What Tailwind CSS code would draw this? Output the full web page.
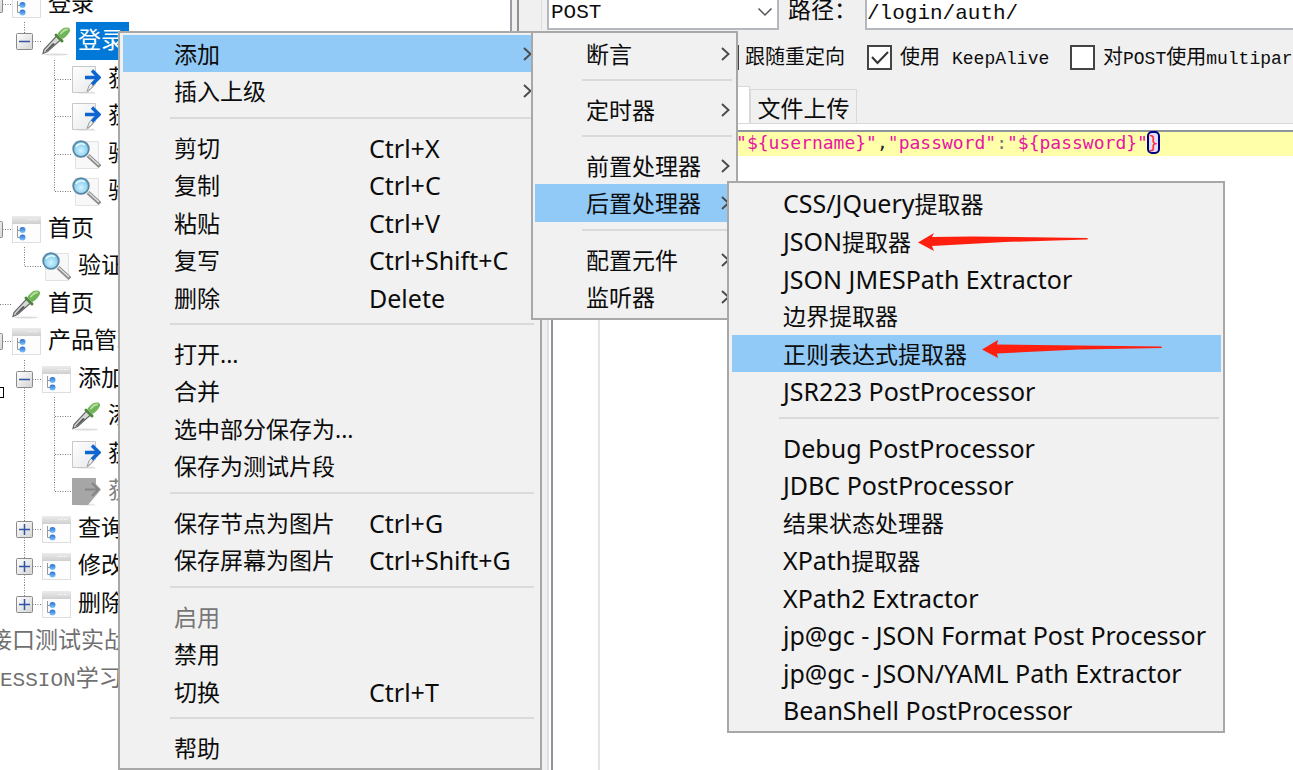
<!DOCTYPE html>
<html lang="zh-CN">
<head>
<meta charset="utf-8">
<title>JMeter</title>
<script src="https://cdn.jsdelivr.net/npm/@tailwindcss/browser@4"></script>
</head>
<body class="relative h-screen overflow-hidden bg-[#f0f0f0] font-['Noto_Sans','Noto_Sans_CJK_SC',sans-serif] text-[#0c0c0c]">

<!-- shared symbols -->
<svg class="absolute size-0" aria-hidden="true">
  <defs>
    <linearGradient id="bar" x1="0" y1="0" x2="0" y2="1"><stop offset="0" stop-color="#ececec"/><stop offset="1" stop-color="#cfcfcf"/></linearGradient>
    <linearGradient id="ball" x1="0" y1="0" x2="0" y2="1"><stop offset="0" stop-color="#2b6fd0"/><stop offset="1" stop-color="#7cc4ff"/></linearGradient>
    <linearGradient id="page" x1="0" y1="0" x2="1" y2="1"><stop offset="0" stop-color="#fff"/><stop offset="1" stop-color="#e6e8ea"/></linearGradient>
    <linearGradient id="box" x1="0" y1="0" x2="1" y2="1"><stop offset="0" stop-color="#fff"/><stop offset="1" stop-color="#d4d4d4"/></linearGradient>
    <radialGradient id="lens" cx=".5" cy=".6" r=".6"><stop offset="0" stop-color="#d4f4ff"/><stop offset="1" stop-color="#6fc3ea"/></radialGradient>
  </defs>
  <symbol id="folder" viewBox="0 0 30 32">
    <rect x="1.500" y="3.500" width="28" height="26" fill="#fdfdfd" stroke="#dedede"/>
    <rect x="1" y="3" width="29" height="8" fill="url(#bar)"/>
    <path d="M17 6.500h10" stroke="#f4f4f4" stroke-width="1" stroke-dasharray="2 1"/>
    <path d="M6.500 13v11.500h4M6.500 17.500h4" fill="none" stroke="#999"/>
    <circle cx="11.500" cy="17" r="3" fill="url(#ball)"/><circle cx="11.500" cy="24.500" r="3" fill="url(#ball)"/>
  </symbol>
  <symbol id="dropper" viewBox="0 0 30 32">
    <ellipse cx="15" cy="29.500" rx="12" ry="1" fill="#dcdcdc"/>
    <path d="M2 28.500l1-4L15.500 11l4 4L6.500 26.500z" fill="#d7d9d8" stroke="#666" stroke-width="1.200"/>
    <path d="M4 26.500L12 18l2 1-8 7z" fill="#555"/>
    <path d="M15 10l6 6" stroke="#4f853c" stroke-width="3" stroke-linecap="round"/>
    <path d="M16.500 9c2-3 5-6.500 9-6.500 3 0 4.500 2 3 4.500-1.800 3-4.500 6-7.500 7z" fill="#6fb558"/>
    <path d="M20 8.500c2-2.500 4-4 6-4" fill="none" stroke="#b5e09f" stroke-width="2" stroke-linecap="round"/>
  </symbol>
  <symbol id="extract" viewBox="0 0 30 32">
    <path d="M5 30.500h20l-3-2z" fill="#ddd"/>
    <path d="M1.500 3.500h23v18l-8 8h-15z" fill="url(#page)" stroke="#c8c8c8"/>
    <path d="M23 17l-5 6-2 5.500 4.500-3.500 4-7z" fill="#f1f1f1" stroke="#999"/>
    <path d="M14 14.500h12M21 7.500l7 7-7 7" fill="none" stroke="#0b66cf" stroke-width="3.400"/>
  </symbol>
  <symbol id="extract-off" viewBox="0 0 30 32">
    <path d="M5 30.500h20l-3-2z" fill="#e4e4e4"/>
    <path d="M1 3h24v6l5 5.500-5 6-8 9.500H1z" fill="#a6a6a6"/>
    <path d="M14 14.500h13M21 8l6.500 6.500L21 21" fill="none" stroke="#858585" stroke-width="2"/>
  </symbol>
  <symbol id="magnifier" viewBox="0 0 30 32">
    <path d="M4.500 3.500h23v27h-23z" fill="#f8f8f8" stroke="#e2e2e2"/>
    <path d="M17 17.500L29 28.500" stroke="#8a8a8a" stroke-width="4"/>
    <path d="M17.500 17.500L28 27" stroke="#e0e0e0" stroke-width="1.500"/>
    <circle cx="10" cy="11" r="7.800" fill="url(#lens)" stroke="#5a86a3" stroke-width="1.800"/>
    <path d="M5 9c1-3 6-4.500 9-2" fill="none" stroke="#eafaff" stroke-width="1.500"/>
  </symbol>
  <!-- guide cells of the tree, 30px wide, centred on y = 19 -->
  <g id="g-v"><path d="M13.500 0V38" stroke="#777" stroke-dasharray="1 1.500"/></g>
  <g id="g-h"><path d="M14 19.500H30" stroke="#777" stroke-dasharray="1 1.500"/></g>
  <g id="g-up"><path d="M13.500 0V19" stroke="#777" stroke-dasharray="1 1.500"/></g>
  <g id="g-box"><rect x="5.500" y="11.500" width="16" height="16" rx="1" fill="url(#box)" stroke="#8a8a8a"/><path d="M8 19.500h11" stroke="#3353a8" stroke-width="1.500"/></g>
  <g id="g-plus"><use href="#g-box"/><path d="M13.500 14v11" stroke="#3353a8" stroke-width="1.500"/></g>
  <symbol id="chev" viewBox="0 0 10 16"><path d="M1 2l6.500 6L1 14" fill="none" stroke="#4a4a4a" stroke-width="1.900"/></symbol>
</svg>

<div class="flex h-full">
  <!-- test plan tree -->
  <aside class="w-[512px] shrink-0 overflow-hidden border-r-2 border-[#9a9da3] bg-white">
    <ul role="tree" aria-label="测试计划" class="-mt-[15px] font-['Liberation_Mono','Noto_Sans_CJK_SC',monospace] text-[23px] leading-[35px] whitespace-nowrap *:flex *:h-[38px] *:items-center *:odd:h-[37px] [&_span]:ml-[5px] [&_span]:px-[2px] [&_span]:pt-[3px] [&_svg]:shrink-0">
      <li role="treeitem"><svg class="h-full w-[11px]"><use href="#g-h" x="-19"/><use href="#g-box" x="-19"/></svg><svg class="h-8 w-[30px]"><use href="#folder"/></svg><span>登录</span></li>
      <li role="treeitem" aria-selected="true"><svg class="ml-[11px] h-full w-[30px]"><use href="#g-up"/><use href="#g-h"/><use href="#g-box"/></svg><svg class="h-8 w-[30px]"><use href="#dropper"/></svg><span class="w-[53px] bg-[#0078d7] text-white">登录</span></li>
      <li role="treeitem"><svg class="ml-[41px] h-full w-[30px]"><use href="#g-v"/><use href="#g-h"/></svg><svg class="h-8 w-[30px]"><use href="#extract"/></svg><span>获取</span></li>
      <li role="treeitem"><svg class="ml-[41px] h-full w-[30px]"><use href="#g-v"/><use href="#g-h"/></svg><svg class="h-8 w-[30px]"><use href="#extract"/></svg><span>获取</span></li>
      <li role="treeitem"><svg class="ml-[41px] h-full w-[30px]"><use href="#g-v"/><use href="#g-h"/></svg><svg class="h-8 w-[30px]"><use href="#magnifier"/></svg><span>验证</span></li>
      <li role="treeitem"><svg class="ml-[41px] h-full w-[30px]"><use href="#g-up"/><use href="#g-h"/></svg><svg class="h-8 w-[30px]"><use href="#magnifier"/></svg><span>验证</span></li>
      <li role="treeitem"><svg class="h-full w-[11px]"><use href="#g-h" x="-19"/><use href="#g-box" x="-19"/></svg><svg class="h-8 w-[30px]"><use href="#folder"/></svg><span>首页</span></li>
      <li role="treeitem"><svg class="ml-[11px] h-full w-[30px]"><use href="#g-up"/><use href="#g-h"/></svg><svg class="h-8 w-[30px]"><use href="#magnifier"/></svg><span>验证</span></li>
      <li role="treeitem"><svg class="h-full w-[11px]"><use href="#g-h" x="-19"/></svg><svg class="h-8 w-[30px]"><use href="#dropper"/></svg><span>首页</span></li>
      <li role="treeitem"><svg class="h-full w-[11px]"><use href="#g-h" x="-19"/><use href="#g-box" x="-19"/></svg><svg class="h-8 w-[30px]"><use href="#folder"/></svg><span>产品管理</span></li>
      <li role="treeitem"><svg class="ml-[11px] h-full w-[30px]"><use href="#g-v"/><use href="#g-h"/><use href="#g-box"/></svg><svg class="h-8 w-[30px]"><use href="#folder"/></svg><span>添加</span></li>
      <li role="treeitem"><svg class="ml-[11px] h-full w-[30px]"><use href="#g-v"/></svg><svg class="h-full w-[30px]"><use href="#g-v"/><use href="#g-h"/></svg><svg class="h-8 w-[30px]"><use href="#dropper"/></svg><span>添加</span></li>
      <li role="treeitem"><svg class="ml-[11px] h-full w-[30px]"><use href="#g-v"/></svg><svg class="h-full w-[30px]"><use href="#g-v"/><use href="#g-h"/></svg><svg class="h-8 w-[30px]"><use href="#extract"/></svg><span>获取</span></li>
      <li role="treeitem"><svg class="ml-[11px] h-full w-[30px]"><use href="#g-v"/></svg><svg class="h-full w-[30px]"><use href="#g-up"/><use href="#g-h"/></svg><svg class="h-8 w-[30px]"><use href="#extract-off"/></svg><span class="text-[#808080]">获取</span></li>
      <li role="treeitem"><svg class="ml-[11px] h-full w-[30px]"><use href="#g-v"/><use href="#g-h"/><use href="#g-plus"/></svg><svg class="h-8 w-[30px]"><use href="#folder"/></svg><span>查询</span></li>
      <li role="treeitem"><svg class="ml-[11px] h-full w-[30px]"><use href="#g-v"/><use href="#g-h"/><use href="#g-plus"/></svg><svg class="h-8 w-[30px]"><use href="#folder"/></svg><span>修改</span></li>
      <li role="treeitem"><svg class="ml-[11px] h-full w-[30px]"><use href="#g-up"/><use href="#g-h"/><use href="#g-plus"/></svg><svg class="h-8 w-[30px]"><use href="#folder"/></svg><span>删除</span></li>
      <li role="treeitem" class="-ml-[18px] text-[#707070]"><span>接口测试实战</span></li>
      <li role="treeitem" class="-ml-[7px] text-[#707070]"><span><span class="!m-0 !p-0 text-[21px]">ESSION</span>学习</span></li>
    </ul>
  </aside>

  <!-- request editor -->
  <main class="ml-[5px] flex min-w-0 flex-1 flex-col overflow-hidden border-l-2 border-[#909090] font-['Liberation_Mono','Noto_Sans_CJK_SC',monospace] whitespace-nowrap">
    <div class="ml-[22px] flex h-[30px] border-l border-[#dcdcdc] pl-[5px] text-[23px]">
      <div class="relative w-[232px] shrink-0">
        <select aria-label="方法" class="block h-full w-full appearance-none border-x-2 border-b-2 border-[#b4b7bd] bg-white pb-[2px] pl-[2px] text-[21px] leading-[24px]"><option>POST</option></select>
        <svg class="pointer-events-none absolute top-[6px] right-[6px] h-3 w-4" viewBox="0 0 16 12"><path d="M1.500 2.500L8 9l6.500-6.500" fill="none" stroke="#555" stroke-width="1.500"/></svg>
      </div>
      <label for="path" class="w-[86px] shrink-0 pl-[9px] leading-[24px]">路径：</label>
      <input id="path" value="/login/auth/" class="h-full min-w-0 flex-1 border-b-2 border-l-2 border-[#b4b7bd] bg-white pb-[2px] text-[21px] leading-[24px]">
    </div>
    <div class="flex h-[54px] items-center pl-[195px] text-[20px] *:flex *:shrink-0 *:items-center *:gap-[8px] [&_input]:size-[25px] [&_input]:appearance-none [&_input]:border-2 [&_input]:border-[#444] [&_input]:bg-white [&>label>span]:pt-[4px]">
      <label class="w-[153px] !gap-[6px]"><input type="checkbox"><span>跟随重定向</span></label>
      <label class="relative w-[203px]"><input type="checkbox" checked><svg class="pointer-events-none absolute left-0 size-[25px]" viewBox="0 0 25 25"><path d="M5 12l5.500 6L21 7" fill="none" stroke="#333" stroke-width="2"/></svg><span>使用 <span class="text-[18px]">KeepAlive</span></span></label>
      <label><input type="checkbox"><span>对<span class="text-[18px]">POST</span>使用<span class="text-[18px]">multipart/form-data</span></span></label>
    </div>
    <div role="tablist" class="mt-[3px] flex h-[37px] items-end border-b border-[#d9d9d9] pl-[29px] text-[23px] *:shrink-0 *:border-x *:border-t *:border-[#d9d9d9] *:pt-[4px]">
      <button role="tab" class="h-[34px] w-[68px]">参数</button>
      <button role="tab" aria-selected="true" class="h-[37px] w-[134px] bg-white pr-[12px] text-right">消息体数据</button>
      <button role="tab" class="h-[34px] w-[107px]">文件上传</button>
    </div>
    <div class="ml-[28px] flex min-h-0 flex-1 flex-col border-l-2 border-[#dedede] bg-white pt-[6px] pl-[2px]">
      <div class="flex flex-1 border-t-2 border-l-2 border-[#8f949b] font-['DejaVu_Sans_Mono',monospace] text-[18px] leading-[22px]">
        <div class="w-[47px] shrink-0 border-r-2 border-[#e4e4e4]"></div>
        <div role="textbox" aria-label="消息体数据" class="min-w-0 flex-1"><p class="bg-[#ffffaa] pb-[2px] pl-[6px] text-[#e815a5]"><span class="text-red-600">{</span>"username"<span class="text-[#333]">:</span>"${username}"<span class="text-[#222]">,</span>"password"<span class="text-[#777]">:</span>"${password}"<span class="rounded-sm bg-[#e3e0ff] text-[#ff3030] outline-2 -outline-offset-1 outline-[#000080]">}</span></p></div>
      </div>
    </div>
  </main>
</div>

<div class="absolute top-[387px] -left-[4px] h-[11px] w-[8px] border border-black bg-white"></div>

<!-- context menu with its two open submenus -->
<div class="absolute top-[31px] left-[118px] w-[424px] text-[23px] leading-[34px] [&_button]:flex [&_button]:h-[37px] [&_button]:w-full [&_button]:items-center [&_button]:pl-[51px] [&_button]:text-left [&_button]:whitespace-nowrap [&_button:nth-child(even)]:h-[38px] [&_hr]:mr-[2px] [&_hr]:ml-[47px] [&_hr]:h-[19px] [&_hr]:border-t-0 [&_hr]:bg-[linear-gradient(#dadada,#dadada)] [&_hr]:bg-[length:100%_2px] [&_hr]:bg-[position:0_7px] [&_hr]:bg-no-repeat [&_b]:text-[25px] [&_b]:font-normal [&_kbd]:font-[inherit] [&_kbd]:text-[25px] [&_svg]:h-4 [&_svg]:w-[10px] [&_svg]:shrink-0">
  <div role="menu" class="border-2 border-[#a8a8a8] bg-[#f1f1f1] py-[2px] pr-[4px] pl-[3px]">
    <div>
      <button role="menuitem" class="bg-[#91c9f7] pr-[3px]"><span class="flex-1">添加</span><svg><use href="#chev"/></svg></button>
      <button role="menuitem" class="pr-[3px]"><span class="flex-1">插入上级</span><svg><use href="#chev"/></svg></button>
    </div>
    <hr>
    <div class="[&_span]:w-[195px]">
      <button role="menuitem"><span>剪切</span><kbd>Ctrl+X</kbd></button>
      <button role="menuitem"><span>复制</span><kbd>Ctrl+C</kbd></button>
      <button role="menuitem"><span>粘贴</span><kbd>Ctrl+V</kbd></button>
      <button role="menuitem"><span>复写</span><kbd>Ctrl+Shift+C</kbd></button>
      <button role="menuitem"><span>删除</span><kbd>Delete</kbd></button>
    </div>
    <hr>
    <div>
      <button role="menuitem">打开...</button>
      <button role="menuitem">合并</button>
      <button role="menuitem">选中部分保存为...</button>
      <button role="menuitem">保存为测试片段</button>
    </div>
    <hr>
    <div class="[&_span]:w-[195px]">
      <button role="menuitem"><span>保存节点为图片</span><kbd>Ctrl+G</kbd></button>
      <button role="menuitem"><span>保存屏幕为图片</span><kbd>Ctrl+Shift+G</kbd></button>
    </div>
    <hr>
    <div class="[&_span]:w-[195px]">
      <button role="menuitem" disabled class="text-[#767676]">启用</button>
      <button role="menuitem">禁用</button>
      <button role="menuitem"><span>切换</span><kbd>Ctrl+T</kbd></button>
    </div>
    <hr>
    <div>
      <button role="menuitem">帮助</button>
    </div>
  </div>

  <div role="menu" aria-label="添加" class="absolute top-0 left-[413px] w-[207px] border-2 border-[#a8a8a8] bg-[#f1f1f1] px-[2px] py-[2px] [&_button]:pr-[3px] [&_span]:flex-1">
    <div><button role="menuitem"><span>断言</span><svg><use href="#chev"/></svg></button></div>
    <hr>
    <div><button role="menuitem"><span>定时器</span><svg><use href="#chev"/></svg></button></div>
    <hr>
    <div>
      <button role="menuitem"><span>前置处理器</span><svg><use href="#chev"/></svg></button>
      <button role="menuitem" class="bg-[#91c9f7]"><span>后置处理器</span><svg><use href="#chev"/></svg></button>
    </div>
    <hr>
    <div>
      <button role="menuitem"><span>配置元件</span><svg><use href="#chev"/></svg></button>
      <button role="menuitem"><span>监听器</span><svg><use href="#chev"/></svg></button>
    </div>
  </div>

  <div role="menu" aria-label="后置处理器" class="absolute top-[150px] left-[609px] w-[498px] border-2 border-[#a8a8a8] bg-[#f1f1f1] py-[2px] pr-[2px] pl-[3px]">
    <div>
      <button role="menuitem"><span><b>CSS/JQuery</b>提取器</span></button>
      <button role="menuitem"><span><b>JSON</b>提取器</span></button>
      <button role="menuitem"><b>JSON JMESPath Extractor</b></button>
      <button role="menuitem">边界提取器</button>
      <button role="menuitem" class="bg-[#91c9f7]">正则表达式提取器</button>
      <button role="menuitem"><b>JSR223 PostProcessor</b></button>
    </div>
    <hr>
    <div>
      <button role="menuitem"><b>Debug PostProcessor</b></button>
      <button role="menuitem"><b>JDBC PostProcessor</b></button>
      <button role="menuitem">结果状态处理器</button>
      <button role="menuitem"><span><b>XPath</b>提取器</span></button>
      <button role="menuitem"><b>XPath2 Extractor</b></button>
      <button role="menuitem"><b>jp@gc - JSON Format Post Processor</b></button>
      <button role="menuitem"><b>jp@gc - JSON/YAML Path Extractor</b></button>
      <button role="menuitem"><b>BeanShell PostProcessor</b></button>
    </div>
  </div>
</div>

<!-- red annotation arrows -->
<svg class="pointer-events-none absolute top-[230px] left-[910px] h-[140px] w-[260px]" viewBox="910 230 260 140" fill="#ff1f0f" aria-hidden="true">
  <path d="M918 242.500L934 233l-2 4 40-.5 115 1.500q2 1 0 1.500l-82 2.500-73 4 2 5z"/>
  <path d="M982 349.500L998 340l-1 4.500 40 .5 124 1.500q2 1 0 1.500l-82 1.500-82 4 1 4.500z"/>
</svg>
</body>
</html>
